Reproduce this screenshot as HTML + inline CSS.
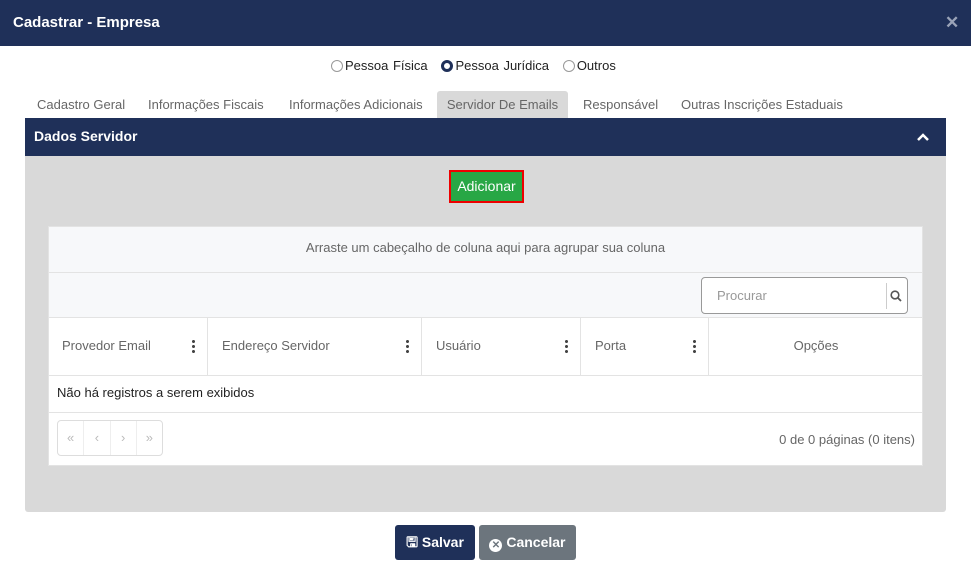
<!DOCTYPE html>
<html><head><meta charset="utf-8"><style>
*{box-sizing:border-box;margin:0;padding:0}
body{width:971px;height:566px;background:#fff;font-family:"Liberation Sans",sans-serif;position:relative;overflow:hidden;font-size:13px}
.a{position:absolute}
.hd{left:0;top:0;width:971px;height:46px;background:#1f3059;color:#fff}
.hd b{position:absolute;left:13px;top:14px;font-size:15px}
.hd span{position:absolute;left:945px;top:13px;font-size:17px;font-weight:bold;color:#9aa3b8}
.rad{display:inline-block;width:12px;height:12px;border:1px solid #999;border-radius:50%;vertical-align:-2px;margin-right:2px}
.tab{top:91px;height:27px;line-height:27px;color:#666;font-size:13px}
.col{top:318px;height:58px;line-height:56px;color:#666;border-right:1px solid #e3e3e3;padding-left:14px}
.dots{position:absolute;right:12px;top:21px;width:3px;height:14px;background:radial-gradient(circle,#444 1.4px,transparent 1.6px) 0 0/3px 5px repeat-y}
.btn{top:525px;height:35px;border-radius:3px;color:#fff;font-weight:bold;font-size:14px;line-height:35px;text-align:center}
</style></head><body>
<div class="a hd"><b>Cadastrar - Empresa</b><span>✕</span></div>
<div class="a" style="left:331px;top:58px;font-size:13px;color:#222;word-spacing:1px">
<span class="rad"></span>Pessoa Física &nbsp;&nbsp;<span class="rad" style="border:3px solid #1f3059"></span>Pessoa Jurídica &nbsp;&nbsp;<span class="rad"></span>Outros</div>
<div class="a tab" style="left:37px">Cadastro Geral</div>
<div class="a tab" style="left:148px">Informações Fiscais</div>
<div class="a tab" style="left:289px">Informações Adicionais</div>
<div class="a tab" style="left:437px;width:131px;background:#d9d9d9;text-align:center;border-radius:3px 3px 0 0">Servidor De Emails</div>
<div class="a tab" style="left:583px">Responsável</div>
<div class="a tab" style="left:681px">Outras Inscrições Estaduais</div>
<div class="a" style="left:25px;top:118px;width:921px;height:38px;background:#1f3059;color:#fff"><b style="position:absolute;left:9px;top:10px;font-size:14px">Dados Servidor</b>
<svg style="position:absolute;right:16px;top:14px" width="14" height="10"><path d="M2 8L7 3L12 8" stroke="#fff" stroke-width="2.5" fill="none"/></svg></div>
<div class="a" style="left:25px;top:156px;width:921px;height:356px;background:#d9d9d9;border-radius:0 0 3px 3px"></div>
<div class="a" style="left:449px;top:170px;width:75px;height:33px;background:#28a745;border:2px solid #e00;color:#fff;text-align:center;line-height:29px;font-size:14px">Adicionar</div>
<div class="a" style="left:48px;top:226px;width:875px;height:240px;background:#fff;border:1px solid #e3e3e3"></div>
<div class="a" style="left:48px;top:226px;width:875px;height:92px;background:#f7f8fa;border:1px solid #e3e3e3"></div>
<div class="a" style="left:48px;top:272px;width:875px;height:1px;background:#e3e3e3"></div>
<div class="a" style="left:48px;top:240px;width:875px;text-align:center;color:#666;font-size:13px">Arraste um cabeçalho de coluna aqui para agrupar sua coluna</div>
<div class="a" style="left:701px;top:277px;width:207px;height:37px;background:#fff;border:1px solid #999;border-radius:4px;color:#999;padding:10px 15px">Procurar
<svg style="position:absolute;right:5px;top:12px" width="12" height="12"><circle cx="5" cy="5" r="3.8" stroke="#555" stroke-width="1.6" fill="none"/><path d="M8 8L11 11" stroke="#555" stroke-width="1.8"/></svg>
<div style="position:absolute;right:20px;top:5px;width:1px;height:26px;background:#ccc"></div></div>
<div class="a col" style="left:48px;width:160px">Provedor Email<span class="dots"></span></div>
<div class="a col" style="left:208px;width:214px">Endereço Servidor<span class="dots"></span></div>
<div class="a col" style="left:422px;width:159px">Usuário<span class="dots"></span></div>
<div class="a col" style="left:581px;width:128px">Porta<span class="dots"></span></div>
<div class="a col" style="left:709px;width:214px;padding:0;text-align:center;border:0">Opções</div>
<div class="a" style="left:48px;top:375px;width:875px;height:1px;background:#e3e3e3"></div>
<div class="a" style="left:57px;top:385px;color:#222">Não há registros a serem exibidos</div>
<div class="a" style="left:48px;top:412px;width:875px;height:1px;background:#e3e3e3"></div>
<div class="a" style="left:57px;top:420px;width:106px;height:36px;border:1px solid #ddd;border-radius:4px;color:#bbb;display:flex">
<span style="flex:1;text-align:center;line-height:34px;border-right:1px solid #eee">«</span><span style="flex:1;text-align:center;line-height:34px;border-right:1px solid #eee">‹</span><span style="flex:1;text-align:center;line-height:34px;border-right:1px solid #eee">›</span><span style="flex:1;text-align:center;line-height:34px">»</span></div>
<div class="a" style="right:56px;top:432px;color:#666">0 de 0 páginas (0 itens)</div>
<div class="a btn" style="left:395px;width:80px;background:#1f3059">🖫 Salvar</div>
<div class="a btn" style="left:479px;width:97px;background:#6c757d"><span style="display:inline-block;width:13px;height:13px;border-radius:50%;background:#fff;color:#6c757d;font-size:10px;line-height:13px;vertical-align:-1px">✕</span> Cancelar</div>
</body></html>
